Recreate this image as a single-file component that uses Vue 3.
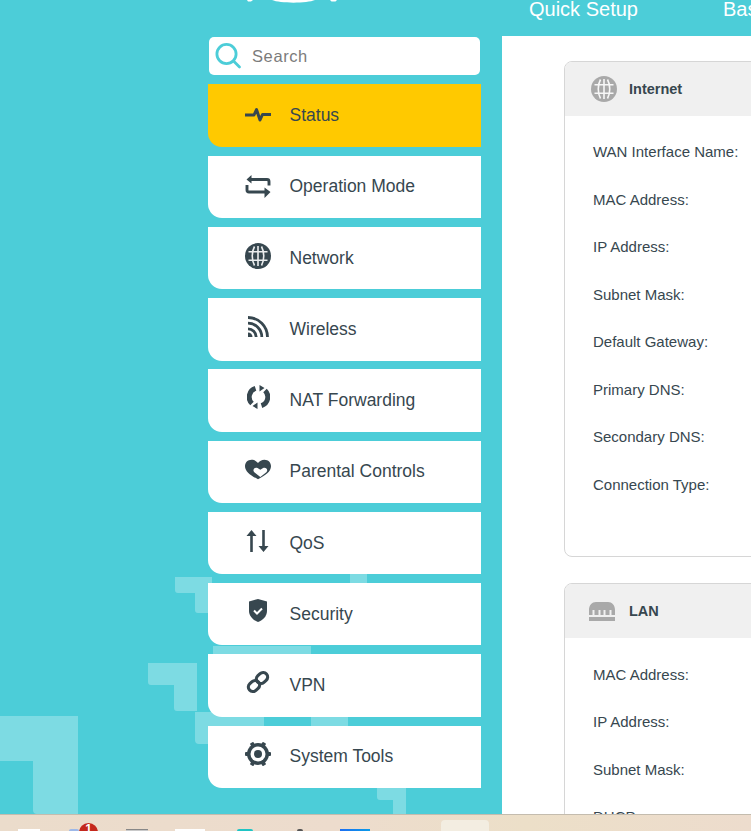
<template>
  <div class="page">
    <svg class="deco" width="751" height="814" viewBox="0 0 751 814">
      <g fill="#fff" fill-opacity="0.28">
        <path d="M0 716h78v98H37a4 4 0 0 1-4-4v-49H0z" />
        <path d="M175 577h37v36h-14a3 3 0 0 1-3-3v-17h-17a3 3 0 0 1-3-3z" />
        <path d="M148 663h49v48h-20a3 3 0 0 1-3-3v-23h-23a3 3 0 0 1-3-3z" />
        <path d="M195 712h69v14h-50v18h-15a4 4 0 0 1-4-4z" />
        <path d="M350 574h17v9h-17z" />
        <path d="M377 788h29v26h-13v-14h-13a3 3 0 0 1-3-3z" />
        <path d="M213 646h98v8h-98z" />
        <path d="M311 717h37v9h-37z" />
      </g>
    </svg>

    <header class="topbar">
      <svg class="logo" width="120" height="4" viewBox="0 0 120 4">
        <path d="M17 0h6l-2 1.500h-3z M42 0h43c-8 3.500-35 3.500-43 0z M100 0h7l-1.500 1.500h-4z" fill="#fff" />
      </svg>
      <a class="top-link">Quick Setup</a>
      <a class="top-link">Basic</a>
    </header>

    <div class="body">
      <aside class="sidebar">
        <div class="search">
          <svg width="28" height="28" viewBox="0 0 28 28" fill="none" stroke="#4ccdd8" stroke-width="2.800" stroke-linecap="round">
            <circle cx="12.500" cy="12" r="9.600" />
            <path d="M19.500 19l6 6" />
          </svg>
          <span>Search</span>
        </div>
        <nav class="menu">
          <a v-for="item in menu" :key="item.label" class="menu-item" :class="{ active: item.active }">
            <span class="menu-icon" :style="{ marginTop: item.dy + 'px' }" v-html="item.icon"></span>
            <span>{{ item.label }}</span>
          </a>
        </nav>
      </aside>

      <main class="content">
        <section v-for="card in cards" :key="card.title" class="card" :class="card.cls">
          <div class="card-head">
            <span class="card-icon" v-html="card.icon"></span>
            <span class="card-title">{{ card.title }}</span>
          </div>
          <ul class="fields">
            <li v-for="f in card.fields" :key="f">{{ f }}</li>
          </ul>
        </section>
      </main>
    </div>

    <footer class="taskbar">
      <i class="tb white" style="left:18px;width:22px"></i>
      <i class="tb blue" style="left:69px;width:10px"></i>
      <b class="badge">1</b>
      <i class="tb gray" style="left:126px;width:22px"></i>
      <i class="tb white" style="left:175px;width:30px"></i>
      <i class="tb teal" style="left:237px;width:16px"></i>
      <i class="tb dark" style="left:297px;width:6px"></i>
      <i class="tb azure" style="left:340px;width:30px"></i>
      <i class="tb active-app"></i>
    </footer>
  </div>
</template>

<script setup>
const dark = '#37474f'

const globe = (c) => `<svg width="26" height="26" viewBox="0 0 26 26" style="display:block"><circle cx="13" cy="13" r="13" fill="${c}"/><g fill="none" stroke="#fff" stroke-width="1.600" stroke-opacity="0.9"><path d="M9.500 3.500C6.500 9 6.500 17 9.500 22.500M16.500 3.500C19.500 9 19.500 17 16.500 22.500M13 3v20M3.500 8.800h19M3.500 17.200h19"/></g></svg>`

const menu = [
  {
    label: 'Status',
    active: true,
    dy: -2,
    icon: `<svg width="26" height="16" viewBox="0 0 26 16" style="display:block" fill="none" stroke="${dark}" stroke-width="3" stroke-linejoin="round"><path d="M0 8h9l2.500-5.500L15 13l2.500-5.500H26"/></svg>`,
  },
  {
    label: 'Operation Mode',
    dy: 0,
    icon: `<svg width="26" height="24" viewBox="0 0 26 24" style="display:block" fill="none" stroke="${dark}" stroke-width="2.900"><path d="M5 4.500h17a2 2 0 0 1 2 2v4M21 17H4a2 2 0 0 1-2-2v-5"/><path d="M6.500 0L1.500 4.500l5 4zM19.500 12.500l6 4.500-6 6z" fill="${dark}" stroke="none"/></svg>`,
  },
  { label: 'Network', dy: -5, icon: globe(dark) },
  {
    label: 'Wireless',
    dy: -6,
    icon: `<svg width="21" height="21" viewBox="0 0 21 21" style="display:block" fill="none" stroke="${dark}" stroke-width="2.800"><path d="M0 1.500A19.500 19.500 0 0 1 19.500 21M0 7.200A13.800 13.800 0 0 1 13.800 21M0 12.800A8.200 8.200 0 0 1 8.200 21"/><path d="M0 16.500A4.500 4.500 0 0 1 4.500 21H0z" fill="${dark}" stroke="none"/></svg>`,
  },
  {
    label: 'NAT Forwarding',
    dy: -7,
    icon: `<svg width="23" height="24" viewBox="0 0 23 24" style="display:block" fill="none" stroke="${dark}" stroke-width="5"><path d="M5 18.500A9 9 0 0 1 8.500 3.400"/><path d="M18 5.500A9 9 0 0 1 14.500 20.600"/><path d="M12.500 0l5 3-5 3.500zM10.500 24l-5-3 5-3.500z" fill="${dark}" stroke="none"/></svg>`,
  },
  {
    label: 'Parental Controls',
    dy: -5,
    icon: `<svg width="28" height="21" viewBox="0 0 28 21" style="display:block"><path d="M14 21C6 17 0 12.500 0 7c0-4 3-7 7-7 3 0 5.500 1.500 7 3.500C15.500 1.500 18 0 21 0c4 0 7 3 7 7 0 5.500-6 10-14 14z" fill="${dark}"/><path d="M16.500 18.500l-6.500-5c-2.500-2.500.5-6 3.500-4.500l3 1.800 3-1.800c3-1.500 6 2 3.500 4.500z" fill="#fff"/></svg>`,
  },
  {
    label: 'QoS',
    dy: -4,
    icon: `<svg width="24" height="22" viewBox="0 0 24 22" style="display:block" fill="${dark}"><path d="M5.500 0L.5 6h3.700v16h2.600V6h3.700zM16.200 0h2.600v16h3.700l-5 6-5-6h3.700z"/></svg>`,
  },
  {
    label: 'Security',
    dy: -8,
    icon: `<svg width="18" height="23" viewBox="0 0 18 23" style="display:block"><path d="M9 0l9 2.500V12c0 5-4 9-9 11-5-2-9-6-9-11V2.500z" fill="${dark}"/><path d="M5 11.500l3 3 5-5" fill="none" stroke="#fff" stroke-width="2"/></svg>`,
  },
  {
    label: 'VPN',
    dy: -7,
    icon: `<svg width="24" height="24" viewBox="0 0 24 24" style="display:block" fill="none" stroke="${dark}" stroke-width="3.200"><rect x="10" y="3.500" width="12" height="9" rx="4.500" transform="rotate(-42 16 8)"/><rect x="2" y="11.500" width="12" height="9" rx="4.500" transform="rotate(-42 8 16)"/></svg>`,
  },
  {
    label: 'System Tools',
    dy: -5,
    icon: `<svg width="26" height="24" viewBox="0 0 26 24" style="display:block"><g fill="${dark}"><circle cx="13" cy="12" r="11"/><rect x="0" y="10" width="26" height="4" rx="1"/><rect x="0" y="10" width="26" height="4" rx="1" transform="rotate(60 13 12)"/><rect x="0" y="10" width="26" height="4" rx="1" transform="rotate(120 13 12)"/></g><circle cx="13" cy="12" r="7.500" fill="#fff"/><circle cx="13" cy="12" r="4" fill="${dark}"/></svg>`,
  },
]

const cards = [
  {
    title: 'Internet',
    cls: 'internet',
    icon: globe('#a9a9a9'),
    fields: [
      'WAN Interface Name:',
      'MAC Address:',
      'IP Address:',
      'Subnet Mask:',
      'Default Gateway:',
      'Primary DNS:',
      'Secondary DNS:',
      'Connection Type:',
    ],
  },
  {
    title: 'LAN',
    cls: 'lan',
    icon: `<svg width="26" height="19" viewBox="0 0 26 19" style="display:block" fill="#a9a9a9"><path d="M0 13V8c0-5 3-8 7-8h12c4 0 7 3 7 8v5h-3.500V8h-2v5h-4V8h-2v5h-3V8h-2v5H5.500V8h-2v5z"/><path d="M0 15h26v4H0z"/></svg>`,
    fields: ['MAC Address:', 'IP Address:', 'Subnet Mask:', 'DHCP:'],
  },
]
</script>

<style>
html,
body {
  margin: 0;
  overflow: hidden;
}
</style>

<style scoped>
.page {
  position: relative;
  width: 751px;
  height: 831px;
  overflow: hidden;
  background: #4ccdd8;
  font-family: "Liberation Sans", Arial, sans-serif;
  color: #37474f;
}

.deco {
  position: absolute;
  left: 0;
  top: 0;
}

.topbar {
  position: relative;
  height: 36px;
  padding-left: 529px;
  box-sizing: border-box;
  display: flex;
  gap: 85px;
}

.logo {
  position: absolute;
  left: 230px;
  top: 0;
}

.top-link {
  color: #fff;
  font-size: 20px;
  line-height: 18px;
  white-space: nowrap;
}

.body {
  position: relative;
  display: flex;
  height: 778px;
  padding-left: 208px;
  box-sizing: border-box;
}

.sidebar {
  width: 273px;
  flex: none;
  margin-right: 21px;
  padding-top: 1px;
}

.search {
  margin: 0 1px;
  height: 38px;
  background: #fff;
  border-radius: 5px;
  display: flex;
  align-items: center;
  gap: 10px;
  padding-left: 5px;
  font-size: 16.5px;
  color: #7b7b7b;
  letter-spacing: 0.6px;
}

.menu {
  margin-top: 9.45px;
  display: flex;
  flex-direction: column;
  gap: 8.85px;
}

.menu-item {
  height: 62.4px;
  background: #fff;
  border-bottom-left-radius: 14px;
  display: flex;
  align-items: center;
  font-size: 17.5px;
  color: #37474f;
}

.menu-item.active {
  background: #ffc900;
}

.menu-icon {
  width: 26px;
  flex: none;
  margin-left: 37px;
  margin-right: 18.5px;
  display: flex;
  justify-content: center;
}

.content {
  flex: 1;
  background: #fff;
  padding: 25px 0 0 62px;
  min-width: 0;
  overflow: hidden;
}

.card {
  width: 400px;
  box-sizing: border-box;
  border: 1px solid #d6d6d6;
  border-radius: 8px;
  overflow: hidden;
  background: #fff;
}

.card.internet {
  height: 496px;
  margin-bottom: 26px;
}

.card.lan {
  height: 400px;
}

.card-head {
  height: 54px;
  background: #f0f0f0;
  display: flex;
  align-items: center;
  padding-left: 26px;
  gap: 12px;
}

.lan .card-head {
  padding-left: 24px;
  gap: 14px;
}

.card-title {
  font-size: 14.5px;
  font-weight: 700;
}

.fields {
  list-style: none;
  margin: 0;
  padding: 12px 0 0 28px;
  font-size: 15px;
}

.lan .fields {
  padding-top: 12.8px;
}

.fields li {
  height: 47.55px;
  line-height: 47.55px;
  white-space: nowrap;
}

.taskbar {
  position: absolute;
  left: 0;
  right: 0;
  bottom: 0;
  height: 17px;
  overflow: hidden;
  border-top: 1px solid #c4bcae;
  box-sizing: border-box;
  background: linear-gradient(90deg, #ebdccb, #eddccd 45%, #ecdfc8 70%, #eddccd);
}

.tb {
  position: absolute;
  top: 14px;
  height: 2px;
}

.tb.white { background: #fff; }
.tb.blue { background: #9db8e8; border-radius: 6px 6px 0 0; }
.tb.gray { background: #c9c9c9; border-top: 1px solid #888; box-sizing: border-box; }
.tb.teal { background: #1fc4c4; border-radius: 8px 8px 0 0; }
.tb.dark { background: #555; border-radius: 3px 3px 0 0; }
.tb.azure { background: linear-gradient(90deg, #1c6ef2, #0a9be8); }

.tb.active-app {
  left: 441px;
  width: 48px;
  height: 16px;
  top: 5px;
  background: #f3ede1;
  border-radius: 4px 4px 0 0;
}

.badge {
  position: absolute;
  left: 79px;
  top: 8px;
  width: 19px;
  height: 19px;
  border-radius: 50%;
  background: #c4281c;
  color: #fff;
  font-size: 12px;
  line-height: 12px;
  text-align: center;
}
</style>
